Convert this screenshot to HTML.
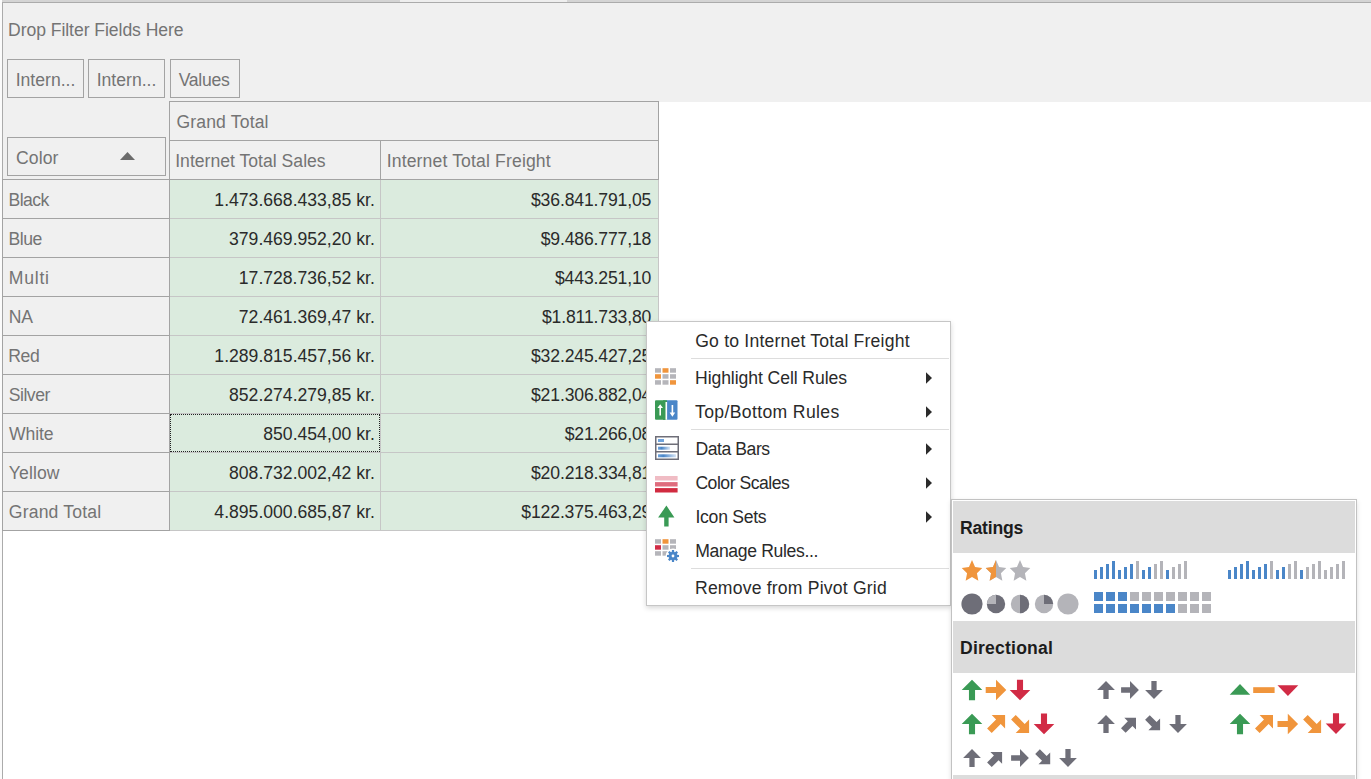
<!DOCTYPE html>
<html><head><meta charset="utf-8"><title>Pivot Grid</title>
<style>
html,body{margin:0;padding:0;}
body{width:1371px;height:779px;overflow:hidden;background:#fff;position:relative;font-family:"Liberation Sans",sans-serif;font-size:17.6px;}
.a{position:absolute;}
.t{position:absolute;white-space:nowrap;line-height:20px;height:20px;}
.h{color:#747474;}
.d{color:#2a2a2a;}
.box{position:absolute;box-sizing:border-box;border:1px solid #a3a3a3;background:#f0f0f0;}
.r{text-align:right;}
.b{font-weight:bold;color:#1c1c1c;}
svg{position:absolute;overflow:visible;}
</style></head><body>

<div class="a" style="left:0px;top:0px;width:1371px;height:2px;background:#d4d4d4;"></div>
<div class="a" style="left:400px;top:0px;width:167px;height:2px;background:#eeeeee;"></div>
<div class="a" style="left:0px;top:2px;width:1371px;height:1px;background:#ababab;"></div>
<div class="a" style="left:3px;top:3px;width:1368px;height:99px;background:#f0f0f0;"></div>
<div class="a" style="left:0px;top:0px;width:2px;height:779px;background:#fbfbfb;"></div>
<div class="a" style="left:2px;top:2px;width:1px;height:777px;background:#ababab;"></div>
<div class="a" style="left:3px;top:101px;width:166px;height:430px;background:#f0f0f0;"></div>
<div class="t h" style="left:8px;top:20px;letter-spacing:-0.06px;">Drop Filter Fields Here</div>
<div class="box" style="left:7px;top:59px;width:77px;height:39px;"></div>
<div class="t h" style="left:15.7px;top:70px;">Intern...</div>
<div class="box" style="left:88px;top:59px;width:77px;height:39px;"></div>
<div class="t h" style="left:96.7px;top:70px;">Intern...</div>
<div class="box" style="left:170px;top:59px;width:70px;height:39px;"></div>
<div class="t h" style="left:178.7px;top:70px;letter-spacing:-0.3px;">Values</div>
<div class="box" style="left:169px;top:101px;width:490px;height:40px;"></div>
<div class="box" style="left:169px;top:140px;width:212px;height:40px;"></div>
<div class="box" style="left:380px;top:140px;width:279px;height:40px;"></div>
<div class="t h" style="left:176.4px;top:112px;letter-spacing:0.15px;">Grand Total</div>
<div class="t h" style="left:175.2px;top:151px;letter-spacing:0.01px;">Internet Total Sales</div>
<div class="t h" style="left:386.7px;top:151px;letter-spacing:0.14px;">Internet Total Freight</div>
<div class="box" style="left:7px;top:137px;width:159px;height:39px;"></div>
<div class="t h" style="left:16px;top:148px;letter-spacing:0.1px;">Color</div>
<svg style="left:119px;top:151px" width="18" height="11"><polygon points="1,9 8.5,1 16,9" fill="#6b6b6b"/></svg>
<div class="a" style="left:170px;top:180px;width:489px;height:351px;background:#dbebde;"></div>
<div class="box" style="left:2px;top:179px;width:168px;height:40px;"></div>
<div class="t h" style="left:8.5px;top:190px;letter-spacing:-0.58px;">Black</div>
<div class="a" style="left:170px;top:218px;width:489px;height:1px;background:#c6c6c6;"></div>
<div class="t d r" style="left:74.80000000000001px;width:300px;top:190px;">1.473.668.433,85 kr.</div>
<div class="t d r" style="left:351.20000000000005px;width:300px;top:190px;letter-spacing:-0.15px;">$36.841.791,05</div>
<div class="box" style="left:2px;top:218px;width:168px;height:40px;"></div>
<div class="t h" style="left:8.5px;top:229px;letter-spacing:-0.5px;">Blue</div>
<div class="a" style="left:170px;top:257px;width:489px;height:1px;background:#c6c6c6;"></div>
<div class="t d r" style="left:74.80000000000001px;width:300px;top:229px;">379.469.952,20 kr.</div>
<div class="t d r" style="left:351.20000000000005px;width:300px;top:229px;letter-spacing:-0.15px;">$9.486.777,18</div>
<div class="box" style="left:2px;top:257px;width:168px;height:40px;"></div>
<div class="t h" style="left:8.8px;top:268px;letter-spacing:0.76px;">Multi</div>
<div class="a" style="left:170px;top:296px;width:489px;height:1px;background:#c6c6c6;"></div>
<div class="t d r" style="left:74.80000000000001px;width:300px;top:268px;">17.728.736,52 kr.</div>
<div class="t d r" style="left:351.20000000000005px;width:300px;top:268px;letter-spacing:-0.15px;">$443.251,10</div>
<div class="box" style="left:2px;top:296px;width:168px;height:40px;"></div>
<div class="t h" style="left:8.8px;top:307px;letter-spacing:-0.25px;">NA</div>
<div class="a" style="left:170px;top:335px;width:489px;height:1px;background:#c6c6c6;"></div>
<div class="t d r" style="left:74.80000000000001px;width:300px;top:307px;">72.461.369,47 kr.</div>
<div class="t d r" style="left:351.20000000000005px;width:300px;top:307px;letter-spacing:-0.15px;">$1.811.733,80</div>
<div class="box" style="left:2px;top:335px;width:168px;height:40px;"></div>
<div class="t h" style="left:8.3px;top:346px;letter-spacing:-0.4px;">Red</div>
<div class="a" style="left:170px;top:374px;width:489px;height:1px;background:#c6c6c6;"></div>
<div class="t d r" style="left:74.80000000000001px;width:300px;top:346px;">1.289.815.457,56 kr.</div>
<div class="t d r" style="left:351.20000000000005px;width:300px;top:346px;letter-spacing:-0.15px;">$32.245.427,25</div>
<div class="box" style="left:2px;top:374px;width:168px;height:40px;"></div>
<div class="t h" style="left:8.8px;top:385px;letter-spacing:-0.5px;">Silver</div>
<div class="a" style="left:170px;top:413px;width:489px;height:1px;background:#c6c6c6;"></div>
<div class="t d r" style="left:74.80000000000001px;width:300px;top:385px;">852.274.279,85 kr.</div>
<div class="t d r" style="left:351.20000000000005px;width:300px;top:385px;letter-spacing:-0.15px;">$21.306.882,04</div>
<div class="box" style="left:2px;top:413px;width:168px;height:40px;"></div>
<div class="t h" style="left:9.1px;top:424px;letter-spacing:-0.15px;">White</div>
<div class="a" style="left:170px;top:452px;width:489px;height:1px;background:#c6c6c6;"></div>
<div class="t d r" style="left:74.80000000000001px;width:300px;top:424px;">850.454,00 kr.</div>
<div class="t d r" style="left:351.20000000000005px;width:300px;top:424px;letter-spacing:-0.15px;">$21.266,08</div>
<div class="box" style="left:2px;top:452px;width:168px;height:40px;"></div>
<div class="t h" style="left:8.8px;top:463px;letter-spacing:0.1px;">Yellow</div>
<div class="a" style="left:170px;top:491px;width:489px;height:1px;background:#c6c6c6;"></div>
<div class="t d r" style="left:74.80000000000001px;width:300px;top:463px;">808.732.002,42 kr.</div>
<div class="t d r" style="left:351.20000000000005px;width:300px;top:463px;letter-spacing:-0.15px;">$20.218.334,81</div>
<div class="box" style="left:2px;top:491px;width:168px;height:40px;"></div>
<div class="t h" style="left:8.8px;top:502px;letter-spacing:0.17px;">Grand Total</div>
<div class="a" style="left:170px;top:530px;width:489px;height:1px;background:#c6c6c6;"></div>
<div class="t d r" style="left:74.80000000000001px;width:300px;top:502px;">4.895.000.685,87 kr.</div>
<div class="t d r" style="left:351.20000000000005px;width:300px;top:502px;letter-spacing:-0.15px;">$122.375.463,29</div>
<div class="a" style="left:380px;top:180px;width:1px;height:351px;background:#c6c6c6;"></div>
<div class="a" style="left:658px;top:180px;width:1px;height:351px;background:#c6c6c6;"></div>
<div class="a" style="left:170px;top:414px;width:210px;height:38px;box-sizing:border-box;border:1px dotted #222;"></div>
<div class="a" style="left:646px;top:321px;width:305px;height:285px;box-sizing:border-box;border:1px solid #c6c6c6;background:#fff;box-shadow:0 2px 5px rgba(0,0,0,0.16);"></div>
<div class="t d" style="left:695.2px;top:331px;letter-spacing:0.2px;">Go to Internet Total Freight</div>
<div class="t d" style="left:695px;top:368px;letter-spacing:-0.08px;">Highlight Cell Rules</div>
<div class="t d" style="left:695px;top:402px;letter-spacing:0.36px;">Top/Bottom Rules</div>
<div class="t d" style="left:695.5px;top:439px;letter-spacing:-0.45px;">Data Bars</div>
<div class="t d" style="left:695.4px;top:473px;letter-spacing:-0.48px;">Color Scales</div>
<div class="t d" style="left:695.5px;top:507px;letter-spacing:-0.28px;">Icon Sets</div>
<div class="t d" style="left:695.2px;top:541px;letter-spacing:-0.35px;">Manage Rules...</div>
<div class="t d" style="left:695px;top:578px;letter-spacing:0.19px;">Remove from Pivot Grid</div>
<div class="a" style="left:691px;top:358px;width:258px;height:1px;background:#dddddd;"></div>
<div class="a" style="left:691px;top:429px;width:258px;height:1px;background:#dddddd;"></div>
<div class="a" style="left:691px;top:568px;width:258px;height:1px;background:#dddddd;"></div>
<svg style="left:925px;top:370.7px" width="9" height="14"><polygon points="1,1.2 7,7 1,12.8" fill="#2b2b2b"/></svg>
<svg style="left:925px;top:404.7px" width="9" height="14"><polygon points="1,1.2 7,7 1,12.8" fill="#2b2b2b"/></svg>
<svg style="left:925px;top:441.7px" width="9" height="14"><polygon points="1,1.2 7,7 1,12.8" fill="#2b2b2b"/></svg>
<svg style="left:925px;top:475.7px" width="9" height="14"><polygon points="1,1.2 7,7 1,12.8" fill="#2b2b2b"/></svg>
<svg style="left:925px;top:509.70000000000005px" width="9" height="14"><polygon points="1,1.2 7,7 1,12.8" fill="#2b2b2b"/></svg>
<svg style="left:655px;top:368px" width="24" height="24"><rect x="0.0" y="0.2" width="6" height="4.5" fill="#b5b5ba"/><rect x="7.5" y="0.2" width="6" height="4.5" fill="#f0953c"/><rect x="15.0" y="0.2" width="6" height="4.5" fill="#b5b5ba"/><rect x="0.0" y="6.2" width="6" height="4.5" fill="#f0953c"/><rect x="7.5" y="6.2" width="6" height="4.5" fill="#b5b5ba"/><rect x="15.0" y="6.2" width="6" height="4.5" fill="#b5b5ba"/><rect x="0.0" y="12.2" width="6" height="4.5" fill="#b5b5ba"/><rect x="7.5" y="12.2" width="6" height="4.5" fill="#b5b5ba"/><rect x="15.0" y="12.2" width="6" height="4.5" fill="#f0953c"/></svg>
<svg style="left:655px;top:400px" width="24" height="21"><rect x="0" y="0.3" width="11" height="19.5" rx="1" fill="#3a9a55"/><rect x="10" y="0.3" width="12.5" height="19.5" rx="1" fill="#4a86c8"/><rect x="8" y="0.3" width="4" height="19.5" fill="#3a9a55"/><rect x="10.5" y="2" width="1.6" height="17.8" fill="#fff"/><path d="M5.2 4.2 L8 8 L6 8 L6 15.6 L4.4 15.6 L4.4 8 L2.4 8 Z" fill="#fff"/><path d="M17.4 16.8 L14.6 12.6 L16.6 12.6 L16.6 5 L18.2 5 L18.2 12.6 L20.2 12.6 Z" fill="#fff"/></svg>
<svg style="left:655px;top:436px" width="24" height="24"><defs><linearGradient id="gb" x1="0" x2="1" y1="0" y2="0"><stop offset="0" stop-color="#6fa3dc"/><stop offset="0.3" stop-color="#4a86c8"/><stop offset="1" stop-color="#d6e4f5"/></linearGradient></defs><rect x="0.75" y="0.75" width="22.5" height="22.5" fill="#fff" stroke="#6e6e78" stroke-width="1.5"/><rect x="0" y="7.5" width="24" height="1.5" fill="#6e6e78"/><rect x="0" y="15" width="24" height="1.5" fill="#6e6e78"/><rect x="3" y="3" width="6" height="3" fill="#6fa3dc"/><rect x="3" y="10.7" width="12" height="3" fill="url(#gb)"/><rect x="3" y="18.3" width="18" height="3" fill="url(#gb)"/></svg>
<svg style="left:655px;top:476px" width="24" height="18"><rect x="0" y="0" width="22.6" height="4.5" fill="#f0bcc4"/><rect x="0" y="6.1" width="22.6" height="4.4" fill="#df6c7d"/><rect x="0" y="12.1" width="22.6" height="4.4" fill="#d12b40"/></svg>
<svg style="left:655px;top:503px" width="24" height="26"><path d="M11.4 2.6 L19.4 14.4 L13.6 14.4 L13.6 23.5 L9.2 23.5 L9.2 14.4 L3.1 14.4 Z" fill="#3a9a55"/></svg>
<svg style="left:655px;top:539px" width="24" height="24"><rect x="0.0" y="0.2" width="6" height="4.5" fill="#b5b5ba"/><rect x="7.5" y="0.2" width="6" height="4.5" fill="#f0953c"/><rect x="15.0" y="0.2" width="6" height="4.5" fill="#b5b5ba"/><rect x="0.0" y="6.2" width="6" height="4.5" fill="#d12b45"/><rect x="7.5" y="6.2" width="6" height="4.5" fill="#b5b5ba"/><rect x="15.0" y="6.2" width="6" height="4.5" fill="#b5b5ba"/><rect x="0.0" y="12.2" width="6" height="4.5" fill="#b5b5ba"/><rect x="7.5" y="12.2" width="6" height="4.5" fill="#b5b5ba"/><circle cx="18" cy="17" r="7.4" fill="#fff"/><polygon points="16.97,10.99 19.03,10.99 19.27,12.89 20.01,13.20 21.52,12.02 22.98,13.48 21.80,14.99 22.11,15.73 24.01,15.97 24.01,18.03 22.11,18.27 21.80,19.01 22.98,20.52 21.52,21.98 20.01,20.80 19.27,21.11 19.03,23.01 16.97,23.01 16.73,21.11 15.99,20.80 14.48,21.98 13.02,20.52 14.20,19.01 13.89,18.27 11.99,18.03 11.99,15.97 13.89,15.73 14.20,14.99 13.02,13.48 14.48,12.02 15.99,13.20 16.73,12.89" fill="#4a86c8"/><circle cx="18" cy="17" r="1.4" fill="#fff"/></svg>
<div class="a" style="left:951px;top:499px;width:406px;height:290px;box-sizing:border-box;border:1px solid #c2c2c2;background:#fff;box-shadow:0 2px 5px rgba(0,0,0,0.13);"></div>
<div class="a" style="left:953px;top:501px;width:402px;height:52px;background:#dcdcdc;"></div>
<div class="a" style="left:953px;top:621px;width:402px;height:52px;background:#dcdcdc;"></div>
<div class="a" style="left:953px;top:775px;width:402px;height:4px;background:#dcdcdc;"></div>
<div class="t b" style="left:960px;top:518px;letter-spacing:-0.2px;">Ratings</div>
<div class="t b" style="left:960px;top:638px;letter-spacing:0.2px;">Directional</div>
<svg style="left:0;top:0" width="1371" height="779"><polygon points="972.00,560.11 975.05,567.08 982.27,567.98 976.93,573.19 978.35,580.72 972.00,576.97 965.65,580.72 967.07,573.19 961.73,567.98 968.95,567.08" fill="#f0953c"/><polygon points="996.00,560.11 999.05,567.08 1006.27,567.98 1000.93,573.19 1002.35,580.72 996.00,576.97 989.65,580.72 991.07,573.19 985.73,567.98 992.95,567.08" fill="#b4b4b9"/><clipPath id="hs"><rect x="984" y="558" width="12" height="26"/></clipPath><g clip-path="url(#hs)"><polygon points="996.00,560.11 999.05,567.08 1006.27,567.98 1000.93,573.19 1002.35,580.72 996.00,576.97 989.65,580.72 991.07,573.19 985.73,567.98 992.95,567.08" fill="#f0953c"/></g><polygon points="1020.00,560.11 1023.05,567.08 1030.27,567.98 1024.93,573.19 1026.35,580.72 1020.00,576.97 1013.65,580.72 1015.07,573.19 1009.73,567.98 1016.95,567.08" fill="#b4b4b9"/><circle cx="972" cy="604" r="10.6" fill="#6e6e78"/><circle cx="996" cy="604" r="9.2" fill="#6e6e78"/><path d="M996 604 L996 594.8 A9.2 9.2 0 0 0 986.8 604 Z" fill="#b4b4b9"/><circle cx="1020" cy="604" r="9.2" fill="#b4b4b9"/><path d="M1020 594.8 A9.2 9.2 0 0 1 1020 613.2 Z" fill="#6e6e78"/><circle cx="1044" cy="604" r="9.2" fill="#b4b4b9"/><path d="M1044 604 L1044 594.8 A9.2 9.2 0 0 1 1053.2 604 Z" fill="#6e6e78"/><circle cx="1068" cy="604" r="10.6" fill="#b4b4b9"/><rect x="1094" y="570" width="3" height="9" fill="#4a86c8"/><rect x="1100" y="567" width="3" height="12" fill="#4a86c8"/><rect x="1106" y="564" width="3" height="15" fill="#4a86c8"/><rect x="1112" y="561" width="3" height="18" fill="#4a86c8"/><rect x="1118" y="570" width="3" height="9" fill="#4a86c8"/><rect x="1124" y="567" width="3" height="12" fill="#4a86c8"/><rect x="1130" y="564" width="3" height="15" fill="#4a86c8"/><rect x="1136" y="561" width="3" height="18" fill="#b4b4b9"/><rect x="1142" y="570" width="3" height="9" fill="#4a86c8"/><rect x="1148" y="567" width="3" height="12" fill="#4a86c8"/><rect x="1154" y="564" width="3" height="15" fill="#b4b4b9"/><rect x="1160" y="561" width="3" height="18" fill="#b4b4b9"/><rect x="1166" y="570" width="3" height="9" fill="#4a86c8"/><rect x="1172" y="567" width="3" height="12" fill="#b4b4b9"/><rect x="1178" y="564" width="3" height="15" fill="#b4b4b9"/><rect x="1184" y="561" width="3" height="18" fill="#b4b4b9"/><rect x="1228" y="570" width="3" height="9" fill="#4a86c8"/><rect x="1234" y="567" width="3" height="12" fill="#4a86c8"/><rect x="1240" y="564" width="3" height="15" fill="#4a86c8"/><rect x="1246" y="561" width="3" height="18" fill="#4a86c8"/><rect x="1252" y="570" width="3" height="9" fill="#4a86c8"/><rect x="1258" y="567" width="3" height="12" fill="#4a86c8"/><rect x="1264" y="564" width="3" height="15" fill="#4a86c8"/><rect x="1270" y="561" width="3" height="18" fill="#b4b4b9"/><rect x="1276" y="570" width="3" height="9" fill="#4a86c8"/><rect x="1282" y="567" width="3" height="12" fill="#4a86c8"/><rect x="1288" y="564" width="3" height="15" fill="#b4b4b9"/><rect x="1294" y="561" width="3" height="18" fill="#b4b4b9"/><rect x="1300" y="570" width="3" height="9" fill="#4a86c8"/><rect x="1306" y="567" width="3" height="12" fill="#b4b4b9"/><rect x="1312" y="564" width="3" height="15" fill="#b4b4b9"/><rect x="1318" y="561" width="3" height="18" fill="#b4b4b9"/><rect x="1324" y="570" width="3" height="9" fill="#b4b4b9"/><rect x="1330" y="567" width="3" height="12" fill="#b4b4b9"/><rect x="1336" y="564" width="3" height="15" fill="#b4b4b9"/><rect x="1342" y="561" width="3" height="18" fill="#b4b4b9"/><rect x="1094" y="592" width="9" height="9" fill="#4a86c8"/><rect x="1094" y="604" width="9" height="9" fill="#4a86c8"/><rect x="1106" y="592" width="9" height="9" fill="#4a86c8"/><rect x="1106" y="604" width="9" height="9" fill="#4a86c8"/><rect x="1118" y="592" width="9" height="9" fill="#4a86c8"/><rect x="1118" y="604" width="9" height="9" fill="#4a86c8"/><rect x="1130" y="592" width="9" height="9" fill="#b4b4b9"/><rect x="1130" y="604" width="9" height="9" fill="#4a86c8"/><rect x="1142" y="592" width="9" height="9" fill="#b4b4b9"/><rect x="1142" y="604" width="9" height="9" fill="#4a86c8"/><rect x="1154" y="592" width="9" height="9" fill="#b4b4b9"/><rect x="1154" y="604" width="9" height="9" fill="#4a86c8"/><rect x="1166" y="592" width="9" height="9" fill="#b4b4b9"/><rect x="1166" y="604" width="9" height="9" fill="#4a86c8"/><rect x="1178" y="592" width="9" height="9" fill="#b4b4b9"/><rect x="1178" y="604" width="9" height="9" fill="#b4b4b9"/><rect x="1190" y="592" width="9" height="9" fill="#b4b4b9"/><rect x="1190" y="604" width="9" height="9" fill="#b4b4b9"/><rect x="1202" y="592" width="9" height="9" fill="#b4b4b9"/><rect x="1202" y="604" width="9" height="9" fill="#b4b4b9"/><path d="M0 -10.3 L10.3 0 L3.0488 0 L3.0488 10.3 L-3.0488 10.3 L-3.0488 0 L-10.3 0 Z" fill="#3a9a55" transform="translate(972 690) rotate(0)"/><path d="M0 -10.3 L10.3 0 L3.0488 0 L3.0488 10.3 L-3.0488 10.3 L-3.0488 0 L-10.3 0 Z" fill="#f0953c" transform="translate(996 690) rotate(90)"/><path d="M0 -10.3 L10.3 0 L3.0488 0 L3.0488 10.3 L-3.0488 10.3 L-3.0488 0 L-10.3 0 Z" fill="#d12b45" transform="translate(1020 690) rotate(180)"/><path d="M0 -10.3 L10.3 0 L3.0488 0 L3.0488 10.3 L-3.0488 10.3 L-3.0488 0 L-10.3 0 Z" fill="#3a9a55" transform="translate(972 724) rotate(0)"/><path d="M4.59 0 L18 0 L18 13.41 L13.599 9.009 L4.6080000000000005 18 L0 13.392 L8.991 4.401 Z" fill="#f0953c" transform="translate(996.1 724) rotate(0) translate(-9.0 -9.0)"/><path d="M4.59 0 L18 0 L18 13.41 L13.599 9.009 L4.6080000000000005 18 L0 13.392 L8.991 4.401 Z" fill="#f0953c" transform="translate(1020.1 724) rotate(90) translate(-9.0 -9.0)"/><path d="M0 -10.3 L10.3 0 L3.0488 0 L3.0488 10.3 L-3.0488 10.3 L-3.0488 0 L-10.3 0 Z" fill="#d12b45" transform="translate(1044 723.9) rotate(180)"/><path d="M0 -8.9 L8.9 0 L2.6344 0 L2.6344 8.9 L-2.6344 8.9 L-2.6344 0 L-8.9 0 Z" fill="#6e6e78" transform="translate(972 758) rotate(0)"/><path d="M3.299999999999999 0 L15 0 L15 11.700000000000001 L11.474999999999998 8.175 L4.65 15 L0 10.35 L6.824999999999998 3.5250000000000004 Z" fill="#6e6e78" transform="translate(994.6 759.6) rotate(0) translate(-7.5 -7.5)"/><path d="M0 -8.9 L8.9 0 L2.6344 0 L2.6344 8.9 L-2.6344 8.9 L-2.6344 0 L-8.9 0 Z" fill="#6e6e78" transform="translate(1020 758) rotate(90)"/><path d="M3.299999999999999 0 L15 0 L15 11.700000000000001 L11.474999999999998 8.175 L4.65 15 L0 10.35 L6.824999999999998 3.5250000000000004 Z" fill="#6e6e78" transform="translate(1042.7 756.8) rotate(90) translate(-7.5 -7.5)"/><path d="M0 -8.9 L8.9 0 L2.6344 0 L2.6344 8.9 L-2.6344 8.9 L-2.6344 0 L-8.9 0 Z" fill="#6e6e78" transform="translate(1068 758) rotate(180)"/><path d="M0 -8.9 L8.9 0 L2.6344 0 L2.6344 8.9 L-2.6344 8.9 L-2.6344 0 L-8.9 0 Z" fill="#6e6e78" transform="translate(1106 690) rotate(0)"/><path d="M0 -8.9 L8.9 0 L2.6344 0 L2.6344 8.9 L-2.6344 8.9 L-2.6344 0 L-8.9 0 Z" fill="#6e6e78" transform="translate(1130 690) rotate(90)"/><path d="M0 -8.9 L8.9 0 L2.6344 0 L2.6344 8.9 L-2.6344 8.9 L-2.6344 0 L-8.9 0 Z" fill="#6e6e78" transform="translate(1154 690) rotate(180)"/><path d="M0 -8.9 L8.9 0 L2.6344 0 L2.6344 8.9 L-2.6344 8.9 L-2.6344 0 L-8.9 0 Z" fill="#6e6e78" transform="translate(1106 724) rotate(0)"/><path d="M3.299999999999999 0 L15 0 L15 11.700000000000001 L11.474999999999998 8.175 L4.65 15 L0 10.35 L6.824999999999998 3.5250000000000004 Z" fill="#6e6e78" transform="translate(1128.5 725.3) rotate(0) translate(-7.5 -7.5)"/><path d="M3.299999999999999 0 L15 0 L15 11.700000000000001 L11.474999999999998 8.175 L4.65 15 L0 10.35 L6.824999999999998 3.5250000000000004 Z" fill="#6e6e78" transform="translate(1152.6 722.7) rotate(90) translate(-7.5 -7.5)"/><path d="M0 -8.9 L8.9 0 L2.6344 0 L2.6344 8.9 L-2.6344 8.9 L-2.6344 0 L-8.9 0 Z" fill="#6e6e78" transform="translate(1178 724) rotate(180)"/><polygon points="1229.7,694.8 1240,684 1250.2,694.8" fill="#3a9a55"/><rect x="1253.2" y="687.2" width="21.4" height="5.8" fill="#f0953c"/><polygon points="1277.5,685.2 1298.3,685.2 1287.9,696" fill="#d12b45"/><path d="M0 -10.3 L10.3 0 L3.0488 0 L3.0488 10.3 L-3.0488 10.3 L-3.0488 0 L-10.3 0 Z" fill="#3a9a55" transform="translate(1240 724) rotate(0)"/><path d="M4.59 0 L18 0 L18 13.41 L13.599 9.009 L4.6080000000000005 18 L0 13.392 L8.991 4.401 Z" fill="#f0953c" transform="translate(1264 724) rotate(0) translate(-9.0 -9.0)"/><path d="M0 -10.3 L10.3 0 L3.0488 0 L3.0488 10.3 L-3.0488 10.3 L-3.0488 0 L-10.3 0 Z" fill="#f0953c" transform="translate(1287.8 724) rotate(90)"/><path d="M4.59 0 L18 0 L18 13.41 L13.599 9.009 L4.6080000000000005 18 L0 13.392 L8.991 4.401 Z" fill="#f0953c" transform="translate(1312.1 724) rotate(90) translate(-9.0 -9.0)"/><path d="M0 -10.3 L10.3 0 L3.0488 0 L3.0488 10.3 L-3.0488 10.3 L-3.0488 0 L-10.3 0 Z" fill="#d12b45" transform="translate(1336 723.6) rotate(180)"/></svg>
</body></html>
